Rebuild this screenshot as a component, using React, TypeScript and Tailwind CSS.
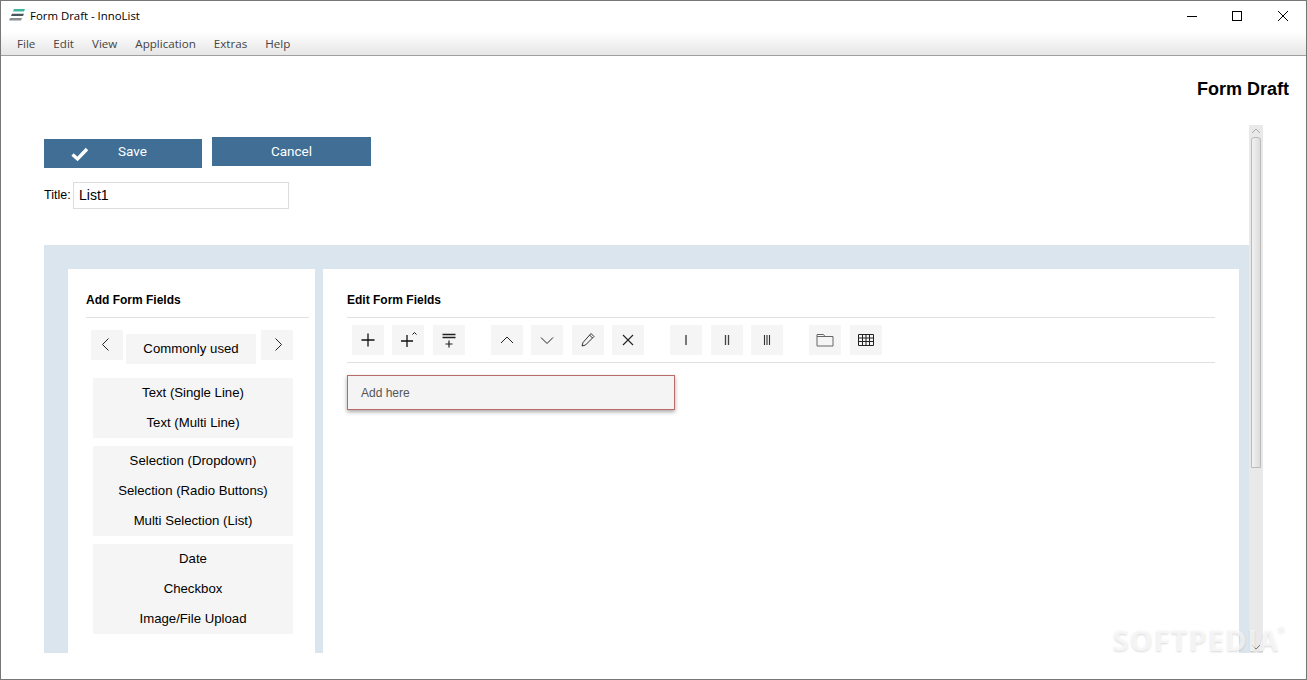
import type { ReactNode } from "react";

const menus = ["File", "Edit", "View", "Application", "Extras", "Help"];

const groups = [
  ["Text (Single Line)", "Text (Multi Line)"],
  ["Selection (Dropdown)", "Selection (Radio Buttons)", "Multi Selection (List)"],
  ["Date", "Checkbox", "Image/File Upload"],
];

function Icon({ children, color = "#222" }: { children: ReactNode; color?: string }) {
  return (
    <svg width="20" height="20" viewBox="0 0 20 20" fill="none" stroke={color} strokeWidth="1">
      {children}
    </svg>
  );
}

function ToolButton({ children, className = "" }: { children: ReactNode; className?: string }) {
  return (
    <div className={`flex h-[30px] w-[32px] items-center justify-center bg-[#f5f5f5] ${className}`}>
      {children}
    </div>
  );
}

export default function App() {
  return (
    <div className="flex h-screen w-full flex-col overflow-hidden border border-[#777] bg-white font-['Liberation_Sans',sans-serif] text-black">
      {/* title bar */}
      <div className="flex h-[31px] shrink-0 items-center justify-between">
        <div className="flex items-center">
          <svg width="16" height="12" viewBox="0 0 16 12" className="mb-[2px] ml-[8px]">
            <path d="M5 0H16L15 2.5H4Z" fill="#3fb5a0" />
            <path d="M3 4.7H15L14 7H2Z" fill="#4a5560" />
            <path d="M1 9H13L12 11.5H0Z" fill="#8a8f94" />
          </svg>
          <span className="mb-[2px] ml-[5px] font-['Open_Sans',sans-serif] text-[11.4px]">Form Draft - InnoList</span>
        </div>
        <div className="mb-[2px] mr-[18px] flex items-center gap-[35px]">
          <svg width="10" height="10" viewBox="0 0 10 10" stroke="#000" strokeWidth="1"><path d="M0 5.5H10" /></svg>
          <svg width="10" height="10" viewBox="0 0 10 10" fill="none" stroke="#000" strokeWidth="1"><rect x="0.5" y="0.5" width="9" height="9" /></svg>
          <svg width="10" height="10" viewBox="0 0 10 10" stroke="#000" strokeWidth="1" className="ml-[1px]"><path d="M0 0L10 10M10 0L0 10" /></svg>
        </div>
      </div>

      {/* menu bar */}
      <div className="flex h-[24px] shrink-0 items-center gap-[18px] border-b border-[#a0a0a0] bg-gradient-to-b from-white to-[#e6e6e6] pl-[16px] font-['Open_Sans',sans-serif] text-[11.6px] text-[#444]">
        {menus.map((m) => (
          <span key={m}>{m}</span>
        ))}
      </div>

      {/* page */}
      <div className="relative flex min-h-0 flex-1 flex-col">
        <div className="mr-[17px] mt-[23px] h-[46px] shrink-0 text-right text-[18px] font-bold leading-[21px]">Form Draft</div>

        <div className="flex h-[528px] shrink-0 pl-[43px]">
          <div className="flex w-[1205px] flex-col pt-[12px]">
            <div className="flex items-start">
              <div className="mt-[2px] flex h-[29px] w-[158px] items-center bg-[#406e95] font-['Roboto',sans-serif] text-[13.5px] text-white">
                <svg width="20" height="16" viewBox="0 0 20 16" fill="none" stroke="#fff" strokeWidth="3.4" className="ml-[26px]">
                  <path d="M2.5 8.5L7.5 13L17 3" />
                </svg>
                <span className="mb-[4px] ml-[28px]">Save</span>
              </div>
              <div className="ml-[10px] flex h-[29px] w-[159px] items-center justify-center bg-[#406e95] font-['Roboto',sans-serif] text-[13.5px] text-white">
                Cancel
              </div>
            </div>

            <div className="mt-[14px] flex items-center">
              <span className="w-[26px] text-[12.5px]">Title:</span>
              <div className="ml-[3px] flex h-[27px] w-[216px] items-center border border-[#ddd] pl-[5px] text-[14px]">List1</div>
            </div>

            {/* form panel */}
            <div className="mt-[36px] flex min-h-0 flex-1 overflow-hidden bg-[#dbe5ee] pl-[24px] pt-[24px]">
              <div className="flex w-[247px] flex-col bg-white pl-[18px] pr-[6px]">
                <div className="flex h-[49px] shrink-0 items-center border-b border-[#e0e0e0] pt-[13px] text-[12px] font-bold">Add Form Fields</div>
                <div className="ml-[5px] mt-[12px] flex items-start">
                  <ToolButton>
                    <Icon><path d="M11.5 3.5L5.5 9.5L11.5 15.5" /></Icon>
                  </ToolButton>
                  <div className="ml-[3px] mt-[4px] flex h-[30px] w-[130px] items-center justify-center bg-[#f5f5f5] text-[13.2px]">Commonly used</div>
                  <ToolButton className="ml-[5px]">
                    <Icon><path d="M8.5 3.5L14.5 9.5L8.5 15.5" /></Icon>
                  </ToolButton>
                </div>
                <div className="ml-[7px] mt-[14px] flex w-[200px] flex-col gap-[8px]">
                  {groups.map((g, i) => (
                    <div key={i} className="bg-[#f5f5f5]">
                      {g.map((t) => (
                        <div key={t} className="flex h-[30px] items-center justify-center text-[13.2px]">{t}</div>
                      ))}
                    </div>
                  ))}
                </div>
              </div>

              <div className="ml-[8px] flex w-[916px] flex-col bg-white pl-[24px] pr-[24px]">
                <div className="flex h-[49px] shrink-0 items-center border-b border-[#e0e0e0] pt-[13px] text-[12px] font-bold">Edit Form Fields</div>
                <div className="flex h-[45px] shrink-0 items-start border-b border-[#e0e0e0] pl-[5px] pt-[7px]">
                  <ToolButton>
                    <Icon color="#111"><path d="M10 3.5V16.5M3.5 10H16.5" strokeWidth="1.3" /></Icon>
                  </ToolButton>
                  <ToolButton className="ml-[8px]">
                    <Icon color="#111">
                      <path d="M9 5V17M3 11H15" strokeWidth="1.3" />
                      <path d="M14.5 4.5L16.5 2.5L18.5 4.5" />
                    </Icon>
                  </ToolButton>
                  <ToolButton className="ml-[9px]">
                    <Icon color="#222">
                      <path d="M3.5 4.5H16.5M3.5 7.5H16.5" strokeWidth="1.4" />
                      <path d="M10 10.5V17.5M6.5 14H13.5" strokeWidth="1.2" />
                    </Icon>
                  </ToolButton>
                  <ToolButton className="ml-[26px]">
                    <Icon><path d="M4 13L10 7L16 13" /></Icon>
                  </ToolButton>
                  <ToolButton className="ml-[8px]">
                    <Icon><path d="M4 7.5L10 13.5L16 7.5" /></Icon>
                  </ToolButton>
                  <ToolButton className="ml-[9px]">
                    <Icon color="#333">
                      <path d="M13 3.5L16 6.5L7.5 15L4 16L5 12.5Z" />
                      <path d="M11.5 5L14.5 8" />
                    </Icon>
                  </ToolButton>
                  <ToolButton className="ml-[8px]">
                    <Icon><path d="M5 5L15 15M15 5L5 15" strokeWidth="1.1" /></Icon>
                  </ToolButton>
                  <ToolButton className="ml-[26px]">
                    <Icon color="#444"><path d="M10 5V15" strokeWidth="1.4" /></Icon>
                  </ToolButton>
                  <ToolButton className="ml-[9px]">
                    <Icon color="#444"><path d="M8.5 5V15M11.5 5V15" strokeWidth="1.3" /></Icon>
                  </ToolButton>
                  <ToolButton className="ml-[8px]">
                    <Icon color="#333"><path d="M7.5 5V15M10 5V15M12.5 5V15" strokeWidth="1.1" /></Icon>
                  </ToolButton>
                  <ToolButton className="ml-[26px]">
                    <Icon color="#666">
                      <path d="M2 16V4.5H8.5L10 6.5H18V16ZM2 6.5H10" />
                    </Icon>
                  </ToolButton>
                  <ToolButton className="ml-[9px]">
                    <Icon color="#222">
                      <path d="M2.5 4.5H17.5V15.5H2.5ZM2.5 8H17.5M2.5 11.5H17.5M6.5 4.5V15.5M10 4.5V15.5M13.5 4.5V15.5" />
                    </Icon>
                  </ToolButton>
                </div>
                <div className="mt-[12px] flex h-[35px] w-[328px] items-center border border-[#b96a6a] bg-[#f4f4f4] pl-[13px] text-[12px] text-[#555] shadow-[0_2px_4px_rgba(0,0,0,0.35)]">
                  Add here
                </div>
              </div>
            </div>
          </div>

          {/* scrollbar */}
          <div className="flex w-[14px] flex-col items-center bg-[#e9e9e9]">
            <svg width="10" height="12" viewBox="0 0 10 12" fill="none" stroke="#aaa" strokeWidth="1"><path d="M1 8L5 4L9 8" /></svg>
            <div className="h-[331px] w-[10px] rounded-t-[3px] border border-[#bbb] bg-gradient-to-r from-[#f2f2f2] to-[#dcdcdc]" />
            <div className="flex-1" />
            <svg width="10" height="12" viewBox="0 0 10 12" fill="none" stroke="#777" strokeWidth="1"><path d="M1 4L5 8L9 4" /></svg>
          </div>
        </div>

        {/* watermark */}
        <div className="absolute bottom-[24px] right-[27px] font-['Open_Sans',sans-serif] text-[29px] font-bold leading-[30px] tracking-[1px] text-white/70 [text-shadow:0_1px_2px_rgba(0,0,0,0.15)]">
          SOFTPEDIA
          <span className="absolute -right-[7px] top-0 text-[9px] leading-[10px]">®</span>
        </div>
      </div>
    </div>
  );
}
